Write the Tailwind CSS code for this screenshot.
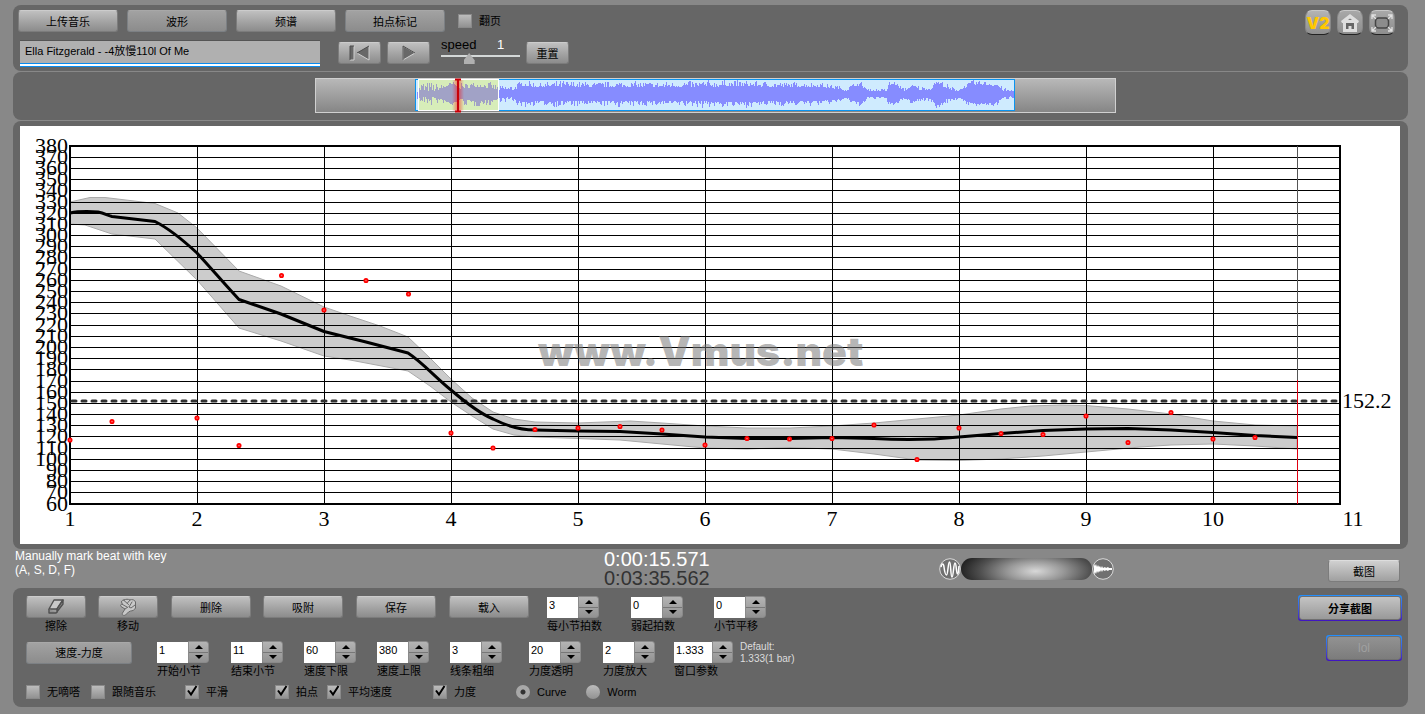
<!DOCTYPE html>
<html lang="zh-CN">
<head>
<meta charset="utf-8">
<title>Vmus.net</title>
<script src="https://cdn.jsdelivr.net/npm/@tailwindcss/browser@4"></script>
</head>
<body class="min-h-screen bg-[#888888] pt-[5px] pr-[17px] pl-[13px] font-['Liberation_Sans','Noto_Sans_CJK_SC',sans-serif] text-[11px] leading-[14px] text-black">

<header class="flex justify-between rounded-[8px] bg-[#666666] pt-[5px] pr-[13px] pb-[4px] pl-[5px]">
  <div>
    <div class="flex items-center gap-[9px]">
      <button class="h-[22px] w-[100px] rounded-[3px] border border-[#7c7c7c] border-t-[#cccccc] bg-linear-to-b from-[#c0c0c0] to-[#8c8c8c] pt-[2px]">上传音乐</button>
      <button class="h-[22px] w-[100px] rounded-[3px] border border-[#7c8084] border-t-[#a8a8a8] bg-linear-to-b from-[#a2a2a2] to-[#8c8c8c] pt-[2px]">波形</button>
      <button class="h-[22px] w-[100px] rounded-[3px] border border-[#7c7c7c] border-t-[#cccccc] bg-linear-to-b from-[#c0c0c0] to-[#8c8c8c] pt-[2px]">频谱</button>
      <button class="h-[22px] w-[100px] rounded-[3px] border border-[#7c8084] border-t-[#a8a8a8] bg-linear-to-b from-[#a2a2a2] to-[#8c8c8c] pt-[2px]">拍点标记</button>
      <label class="ml-[4px] flex items-center gap-[7px]"><input type="checkbox" class="size-[14px] appearance-none border border-[#8a8a8a] bg-linear-to-b from-[#bcbcbc] to-[#929292]">翻页</label>
    </div>
    <div class="mt-[6px] flex items-start pl-[2px]">
      <div class="mt-[2px] w-[300px] border-t border-[#555555] bg-[#b0b0b0]">
        <input type="text" aria-label="曲目" value="Ella Fitzgerald - -4放慢110l Of Me" class="block h-[22px] w-full bg-transparent pb-[5px] pl-[5px] outline-none">
        <div class="h-[4px] border-y border-[#0a8cf0] bg-white"></div>
      </div>
      <button aria-label="回到开头" class="mt-[4px] ml-[18px] flex h-[22px] w-[43px] items-center justify-center rounded-[3px] border border-[#7c7c7c] border-t-[#cccccc] bg-linear-to-b from-[#c0c0c0] to-[#8c8c8c]">
        <svg width="22" height="16" viewBox="0 0 22 16"><path d="M1 1h4v14H1z" fill="#686868"/><path d="M20 1v14L8 8z" fill="#686868"/><path d="M5 1v14H1M20 1v14L8 8" fill="none" stroke="#d0d0d0" stroke-width="1"/><path d="M1 15V1h4M8 8L20 1" fill="none" stroke="#4c4c4c"/></svg>
      </button>
      <button aria-label="播放" class="mt-[4px] ml-[6px] flex h-[22px] w-[43px] items-center justify-center rounded-[3px] border border-[#7c7c7c] border-t-[#cccccc] bg-linear-to-b from-[#c0c0c0] to-[#8c8c8c]">
        <svg width="14" height="16" viewBox="0 0 14 16"><path d="M1 1l12 7-12 7z" fill="#686868" stroke="#d0d0d0"/><path d="M1 15V1l12 7" fill="none" stroke="#4c4c4c"/></svg>
      </button>
      <div class="ml-[11px] w-[79px]">
        <div class="flex h-[14px] items-center text-[13px]"><label for="speed" class="w-[56px]">speed</label><output for="speed" class="text-white">1</output></div>
        <input id="speed" type="range" min="0.5" max="2" step="0.1" value="1" class="block h-[13px] w-full appearance-none bg-[linear-gradient(#d4d8d8,#d4d8d8)] bg-[length:100%_2px] bg-[position:0_3px] bg-no-repeat [&::-webkit-slider-thumb]:h-[11px] [&::-webkit-slider-thumb]:w-[11px] [&::-webkit-slider-thumb]:appearance-none [&::-webkit-slider-thumb]:bg-[#b0b0b0] [&::-webkit-slider-thumb]:[clip-path:polygon(50%_0,100%_65%,100%_100%,0_100%,0_65%)]">
      </div>
      <button class="mt-[4px] ml-[6px] h-[22px] w-[43px] rounded-[3px] border border-[#7c7c7c] border-t-[#cccccc] bg-linear-to-b from-[#c0c0c0] to-[#8c8c8c] pt-[2px]">重置</button>
    </div>
  </div>
  <nav class="flex items-start gap-[6px]">
    <a href="#v2" class="flex h-[25px] w-[26px] items-center justify-center rounded-[7px] border border-[#888888] border-t-[#c8c8c8] border-b-[#222222] bg-linear-to-b from-[#b4b4b4] to-[#8e8e8e] font-[Inter,'Liberation_Sans',sans-serif] text-[16px] font-black text-[#ffc800]">V2</a>
    <a href="#home" aria-label="主页" class="flex h-[25px] w-[26px] items-center justify-center rounded-[7px] border border-[#888888] border-t-[#c8c8c8] border-b-[#222222] bg-linear-to-b from-[#a8a8a8] to-[#8e8e8e]">
      <svg width="20" height="20" viewBox="0 0 20 20"><path d="M10 1l9 7-1 2h-1v9H3v-9H2L1 8z" fill="#dedede"/><path d="M6 16v-6h8v6h-2.500v-3h-3v3z" fill="#666666"/><path d="M8 7l2-1.500L12 7z" fill="#777777"/></svg>
    </a>
    <a href="#fullscreen" aria-label="全屏" class="flex h-[25px] w-[26px] items-center justify-center rounded-[7px] border border-[#888888] border-t-[#c8c8c8] border-b-[#222222] bg-linear-to-b from-[#a8a8a8] to-[#8e8e8e]">
      <svg width="24" height="20" viewBox="0 0 24 20" fill="none"><rect x="5.500" y="5" width="13" height="10" rx="3" fill="#8c8c8c" stroke="#454545" stroke-width="1.500"/><path d="M2 6V2h4M2 2l4 4M18 2h4v4M22 2l-4 4M2 14v4h4M2 18l4-4M22 14v4h-4M22 18l-4-4" stroke="#e0e0e0" stroke-width="1.300"/></svg>
    </a>
  </nav>
</header>

<section aria-label="波形总览" class="mt-px flex justify-center rounded-[8px] bg-[#666666] pt-[6px] pb-[7px] pl-[10px]">
  <svg class="block w-[801px] max-w-full" viewBox="315 78 801 35">
    <defs>
      <linearGradient id="track" x1="0" y1="0" x2="0" y2="1"><stop offset="0" stop-color="#b9b9b9"/><stop offset="1" stop-color="#858585"/></linearGradient>
      <linearGradient id="glow"><stop offset="0" stop-color="#f00" stop-opacity="0"/><stop offset=".5" stop-color="#f00" stop-opacity=".5"/><stop offset="1" stop-color="#f00" stop-opacity="0"/></linearGradient>
    </defs>
    <rect x="315.500" y="78.500" width="800" height="34" fill="url(#track)" stroke="#d0d0d0"/>
    <rect x="415.500" y="79.500" width="599" height="31" fill="#cfebfe" stroke="#0a94f0"/>
    <path id="wave" fill="#868cff" shape-rendering="crispEdges"/>
    <rect x="418.500" y="79.500" width="80" height="31" fill="#dfee80" fill-opacity=".55"/>
    <path id="wave-sel" fill="#a1a2c6" shape-rendering="crispEdges"/>
    <rect x="418.500" y="79.500" width="80" height="31" fill="none" stroke="#fff"/>
    <rect x="452" y="80" width="12" height="31" fill="url(#glow)"/>
    <path d="M458 79v33M455 79.500h6M455 111.500h6" stroke="#c80008" stroke-width="2"/>
  </svg>
</section>

<main class="mt-px rounded-[8px] bg-[#666666] py-[5px] pr-[8px] pl-[7px]">
  <svg class="block h-auto w-full bg-white" viewBox="20 126 1380 418" font-family="'Liberation Serif',serif" font-size="22">
    <path fill="#000" fill-opacity=".2" stroke="#aaa" stroke-width="1" d="M70 202L90 197.500L105 197.500L155 203.500L178 213L197 228L239 271L281 286L324 307L350 316L380 326L408 337L430 358L451 379L472 398L493 412L514 419L535 422L578 423L630 421L662 423L705 426L747 428L790 428L832 426L874 423L917 419L959 415L1001 409L1030 406L1060 405L1086 405.500L1128 409L1171 414L1213 421L1255 425L1297 426V449L1255 446L1213 444L1171 445L1140 447L1086 452L1043 456L1000 459L959 460.500L917 460L874 454L832 449L790 447.500L747 449L705 448L662 444L620 440L578 438.500L535 437L514 435L493 429L472 416L451 402L430 386L408 371L350 360L324 356L281 341L239 328L197 280L155 239L112 234L85 225L70 224Z"/>
    <g id="grid" stroke="#000" stroke-width="1" shape-rendering="crispEdges"></g>
    <rect x="70" y="146" width="1270" height="358" fill="none" stroke="#000" stroke-width="2"/>
    <path d="M70 401H1338" stroke="#333" stroke-width="3" stroke-dasharray="4 6" stroke-dashoffset="-2" stroke-linecap="round"/>
    <path d="M70 213C80 211 90 211.500 98 212C104 213 108 215.500 112 216.500L155 221.500C170 229 184 241 197 253C211 268 227 287 239 299.500L281 314L324 331.500L366 342L408 353C422 362 436 378 451 390C465 402 479 413 493 419C507 426 521 430 535 430L578 431L620 431.500L662 434L705 437L747 438.500L790 438.500L832 437.500L874 438.500C900 440 930 440 959 437L1001 433.500L1043 430.500L1086 429L1128 428.500L1171 430L1213 432.500L1255 435.500L1297 437.500" fill="none" stroke="#000" stroke-width="3" stroke-linejoin="round"/>
    <path d="M1297.500 146V380" stroke="#555" stroke-width="1"/>
    <path d="M1297.500 380V504" stroke="#e00010" stroke-width="1"/>
    <g id="dots" fill="#ff7070" stroke="#f00" stroke-width="1.700"></g>
    <text x="538" y="366" font-family="Inter,'Liberation Sans',sans-serif" font-weight="900" font-size="41" fill="#777" fill-opacity=".55">www.Vmus.net</text>
    <g id="y-labels" text-anchor="end"></g>
    <g id="x-labels" text-anchor="middle"></g>
    <text x="1342" y="408">152.2</text>
  </svg>
</main>

<section class="grid h-[39px] grid-cols-[589px_335px_1fr_auto] items-start pr-[8px] pl-[2px]">
  <p class="text-[12px] text-white">Manually mark beat with key<br>(A, S, D, F)</p>
  <div class="pt-px text-[20px] leading-[19px] text-[#333333]"><div class="text-white">0:00:15.571</div><div>0:03:35.562</div></div>
  <div class="flex items-center pt-[8px]">
    <svg width="22" height="24" viewBox="0 0 22 24" fill="none"><circle cx="11" cy="12" r="10.300" fill="#707070" stroke="#d8d8d8"/><path d="M2 10C3 6 4.500 6 5 10s1 8 2.500 8S9 5 10.500 5s1 15 2.500 15S14.500 6 16 6s1.200 11 2.500 11S19.500 12 20 9" stroke="#fff" stroke-width="1.500"/></svg>
    <input type="range" aria-label="缩放" min="0" max="100" value="57" class="h-[22px] w-[131px] appearance-none rounded-full bg-[radial-gradient(ellipse_60%_130%_at_57%_60%,#d8d8d8,#999999_35%,#505050_70%,#1c1c1c)] [&::-webkit-slider-thumb]:appearance-none [&::-webkit-slider-thumb]:opacity-0">
    <svg width="22" height="24" viewBox="0 0 22 24" fill="none"><circle cx="11" cy="12" r="10.300" fill="#707070" stroke="#d8d8d8"/><path d="M2 7l1 2 1-2 1 3 1-2 1 2 1-1 1 2 1-2 1 2 2-1 1 1 2-1 1 1h3v2h-3l-1 1-2-1-1 1-2-1-1 2-1-2-1 2-1-1-1 2-1-2-1 3-1-2-1 3z" fill="#fff"/></svg>
  </div>
  <button class="mt-[11px] h-[22px] w-[72px] rounded-[3px] border border-[#7c7c7c] border-t-[#dddddd] bg-linear-to-b from-[#d0d0d0] to-[#a0a0a0] pt-[2px]">截图</button>
</section>

<footer class="flex justify-between rounded-[8px] bg-[#666666] pt-[8px] pr-[6px] pb-[7px] pl-[13px]">
  <div>
    <div class="flex h-[37px] items-start">
      <div class="flex w-[60px] flex-col text-center">
        <button id="erase" class="flex h-[22px] items-center justify-center rounded-[3px] border border-[#7c7c7c] border-t-[#cccccc] bg-linear-to-b from-[#c0c0c0] to-[#8c8c8c]"><svg width="18" height="16" viewBox="0 0 18 16" fill="none" stroke="#505050" stroke-width="1.400" stroke-linejoin="round"><path d="M7 1h9l-6 9H2z" fill="#c8c8c8"/><path d="M2 10v4h7l7-9V1l-6 9v4" fill="#909090"/></svg></button>
        <label for="erase" class="mt-px block">擦除</label>
      </div>
      <div class="ml-[12px] flex w-[60px] flex-col text-center">
        <button id="move" class="flex h-[22px] items-center justify-center rounded-[3px] border border-[#7c7c7c] border-t-[#cccccc] bg-linear-to-b from-[#c0c0c0] to-[#8c8c8c]"><svg width="18" height="18" viewBox="0 0 18 18" fill="#c8c8c8" stroke="#686868" stroke-linejoin="round" stroke-linecap="round"><path d="M5 2C7 1 9 1 11 2c2-1 5 0 5.500 2v6c-1 2-3 3-5 3l-2 1-3 3c-2 1-4 0-3-2l2.500-4L2 8.500C1 7 2 6 3.500 6.500L2.500 4C2.500 2.500 4 2 5 2z"/><path d="M5 2.500l4.500 4M3.500 6.500L8 9M11 2L8.500 5M13 4l-3 5 2 1 4-3M6 11l3-2" fill="none"/></svg></button>
        <label for="move" class="mt-px block">移动</label>
      </div>
      <button class="ml-[13px] h-[22px] w-[80px] rounded-[3px] border border-[#7c7c7c] border-t-[#cccccc] bg-linear-to-b from-[#c0c0c0] to-[#8c8c8c] pt-[2px]">删除</button>
      <button class="ml-[12px] h-[22px] w-[80px] rounded-[3px] border border-[#7c7c7c] border-t-[#cccccc] bg-linear-to-b from-[#c0c0c0] to-[#8c8c8c] pt-[2px]">吸附</button>
      <button class="ml-[13px] h-[22px] w-[80px] rounded-[3px] border border-[#7c7c7c] border-t-[#cccccc] bg-linear-to-b from-[#c0c0c0] to-[#8c8c8c] pt-[2px]">保存</button>
      <button class="ml-[13px] h-[22px] w-[80px] rounded-[3px] border border-[#7c7c7c] border-t-[#cccccc] bg-linear-to-b from-[#c0c0c0] to-[#8c8c8c] pt-[2px]">载入</button>
      <div data-label="每小节拍数" data-value="3" class="ml-[18px] w-[52px]"></div>
      <div data-label="弱起拍数" data-value="0" class="ml-[32px] w-[52px]"></div>
      <div data-label="小节平移" data-value="0" class="ml-[31px] w-[52px]"></div>
    </div>
    <div class="mt-[8px] flex h-[37px] items-start">
      <button class="mt-px h-[22px] w-[106px] rounded-[3px] border border-[#7c8084] border-t-[#a8a8a8] bg-linear-to-b from-[#a2a2a2] to-[#8c8c8c]">速度-力度</button>
      <div data-label="开始小节" data-value="1" class="ml-[25px] w-[52px]"></div>
      <div data-label="结束小节" data-value="11" class="ml-[22px] w-[52px]"></div>
      <div data-label="速度下限" data-value="60" class="ml-[21px] w-[52px]"></div>
      <div data-label="速度上限" data-value="380" class="ml-[21px] w-[52px]"></div>
      <div data-label="线条粗细" data-value="3" class="ml-[21px] w-[52px]"></div>
      <div data-label="力度透明" data-value="20" class="ml-[27px] w-[52px]"></div>
      <div data-label="力度放大" data-value="2" class="ml-[22px] w-[52px]"></div>
      <div data-label="窗口参数" data-value="1.333" class="ml-[19px] w-[59px]"></div>
      <p class="ml-[7px] text-[10px] leading-[12px] text-[#dddddd]">Default:<br>1.333(1 bar)</p>
    </div>
    <div class="mt-[6px] flex h-[16px] items-center">
      <label class="flex items-center gap-[7px]"><input type="checkbox" class="size-[14px] appearance-none border border-[#8a8a8a] bg-linear-to-b from-[#bcbcbc] to-[#929292]">无嘀嗒</label>
      <label class="ml-[11px] flex items-center gap-[7px]"><input type="checkbox" class="size-[14px] appearance-none border border-[#8a8a8a] bg-linear-to-b from-[#bcbcbc] to-[#929292]">跟随音乐</label>
      <label data-check class="ml-[29px] flex items-center gap-[7px]">平滑</label>
      <label data-check class="ml-[47px] flex items-center gap-[7px]">拍点</label>
      <label data-check class="ml-[9px] flex items-center gap-[7px]">平均速度</label>
      <label data-check class="ml-[41px] flex items-center gap-[7px]">力度</label>
      <label class="ml-[40px] flex items-center gap-[7px]"><input type="radio" name="view" checked class="size-[14px] appearance-none rounded-full bg-linear-to-b from-[#bcbcbc] to-[#929292] checked:bg-[radial-gradient(circle,#333333_0_2px,#a8a8a8_3px)]">Curve</label>
      <label class="ml-[20px] flex items-center gap-[7px]"><input type="radio" name="view" class="size-[14px] appearance-none rounded-full bg-linear-to-b from-[#bcbcbc] to-[#929292]">Worm</label>
    </div>
  </div>
  <div class="flex flex-col items-end gap-[14px]">
    <div class="-mt-px w-[104px] rounded-[3px] bg-linear-to-b from-[#2090ff] to-[#4010c0] p-px"><button class="block h-[24px] w-full rounded-[3px] border border-[#707070] bg-linear-to-b from-[#c4c4c4] to-[#999999] pt-px font-bold">分享截图</button></div>
    <div class="w-[76px] rounded-[3px] bg-linear-to-b from-[#2090ff] to-[#4010c0] p-px"><button disabled class="block h-[24px] w-full rounded-[3px] border border-[#707070] bg-linear-to-b from-[#929292] to-[#7c7c7c] text-[12px] text-[#a0a0a0]">lol</button></div>
  </div>
</footer>

<script>
// Number fields: text box, stepper and caption
document.querySelectorAll('[data-value]').forEach((el, i) => {
  const id = 'field-' + i;
  el.innerHTML = `
    <div class="flex h-[22px]">
      <input id="${id}" type="text" inputmode="decimal" value="${el.dataset.value}" class="mt-px h-[21px] w-0 min-w-0 flex-1 bg-white pb-[5px] pl-[2px]">
      <div class="flex w-[21px] flex-col divide-y divide-[#777777] rounded-r-[3px] border border-[#8a8a8a] bg-linear-to-b from-[#b4b4b4] to-[#929292]">
        <button aria-label="增加" class="flex flex-1 items-center justify-center"><svg width="8" height="4" viewBox="0 0 8 4"><path d="M0 4L4 0l4 4z"/></svg></button>
        <button aria-label="减少" class="flex flex-1 items-center justify-center"><svg width="8" height="4" viewBox="0 0 8 4"><path d="M0 0h8L4 4z"/></svg></button>
      </div>
    </div>
    <label for="${id}" class="mt-px block whitespace-nowrap">${el.dataset.label}</label>`;
});

// Ticked boxes
document.querySelectorAll('[data-check]').forEach(el => {
  el.insertAdjacentHTML('afterbegin', `
    <span class="grid size-[14px]">
      <input type="checkbox" checked class="col-start-1 row-start-1 size-[14px] appearance-none border border-[#8a8a8a] bg-linear-to-b from-[#bcbcbc] to-[#929292]">
      <svg class="pointer-events-none col-start-1 row-start-1" width="14" height="14" viewBox="0 0 14 14" fill="none" stroke="#000" stroke-width="2"><path d="M3 5.500l3 4L11.500 1"/></svg>
    </span>`);
});

// Chart grid and labels
let lines = '', ys = '', xs = '';
for (let i = 0; i <= 32; i++) {
  const y = Math.floor(146.12 + i * 358 / 32);
  if (i > 0 && i < 32) lines += `<path d="M70 ${y + 0.5}H1340"/>`;
  ys += `<text x="68" y="${y + 7}">${380 - i * 10}</text>`;
}
for (let i = 0; i <= 10; i++) {
  const x = 70 + i * 127;
  if (i > 0 && i < 10) lines += `<path d="M${x + 0.5} 146V504"/>`;
  xs += `<text x="${i === 10 ? 1353 : x}" y="526">${i + 1}</text>`;
}
document.getElementById('grid').innerHTML = lines;
document.getElementById('y-labels').innerHTML = ys;
document.getElementById('x-labels').innerHTML = xs;

// Beat tempo points
const beats = [[70,440],[112,421.5],[197,418],[239,445.5],[281.5,275.5],[324,310],[366,280.5],[408.5,294],[451,433],[493,448],[535,429.5],[578,428],[620,426.5],[662,430],[705,445],[747,438.5],[789.5,439],[832,438.5],[874,425],[917,459.5],[959,428],[1001,433.5],[1043,434.5],[1086,416],[1128,442.5],[1171,412.5],[1213,439],[1255,437.5]];
document.getElementById('dots').innerHTML = beats.map(([x, y]) => `<circle cx="${x}" cy="${y}" r="1.700"/>`).join('');

// Overview waveform: [x, quiet level, peak level]
const env = [[417,2,5],[421,3,13],[432,2,13],[440,5,9],[452,9,13],[460,5,11],[476,7,13],[490,6,12],[499,4,8],[510,3,10],[516,5,11],[522,8,14],[540,7,11],[560,7,14],[590,7,12],[620,7,13],[660,7,12],[700,7,14],[740,8,14],[780,7,12],[820,7,12],[836,5,9],[846,3,7],[856,8,13],[864,6,12],[867,3,5],[886,3,6],[889,8,13],[894,10,13],[899,6,9],[904,3,6],[912,7,10],[918,4,9],[930,4,7],[936,11,14],[942,8,13],[949,3,9],[958,3,6],[964,6,9],[972,9,14],[984,9,13],[997,8,12],[1003,3,6],[1014,2,4]];
let seed = 7;
const rnd = () => (seed = (seed * 16807) % 2147483647) / 2147483647;
let wave = '', sel = '', k = 0;
for (let x = 417; x < 1014; x++) {
  while (k < env.length - 2 && env[k + 1][0] <= x) k++;
  const a = env[k], b = env[k + 1], t = (x - a[0]) / (b[0] - a[0]);
  const lo = a[1] + (b[1] - a[1]) * t, hi = a[2] + (b[2] - a[2]) * t;
  const up = Math.round(lo + (hi - lo) * rnd() ** 2), down = Math.round(lo + (hi - lo) * rnd() ** 2);
  const bar = `M${x} ${94 - up}h1v${up + down}h-1z`;
  if (x > 418 && x < 498) sel += bar; else wave += bar;
}
document.getElementById('wave').setAttribute('d', wave);
document.getElementById('wave-sel').setAttribute('d', sel);
</script>
</body>
</html>
